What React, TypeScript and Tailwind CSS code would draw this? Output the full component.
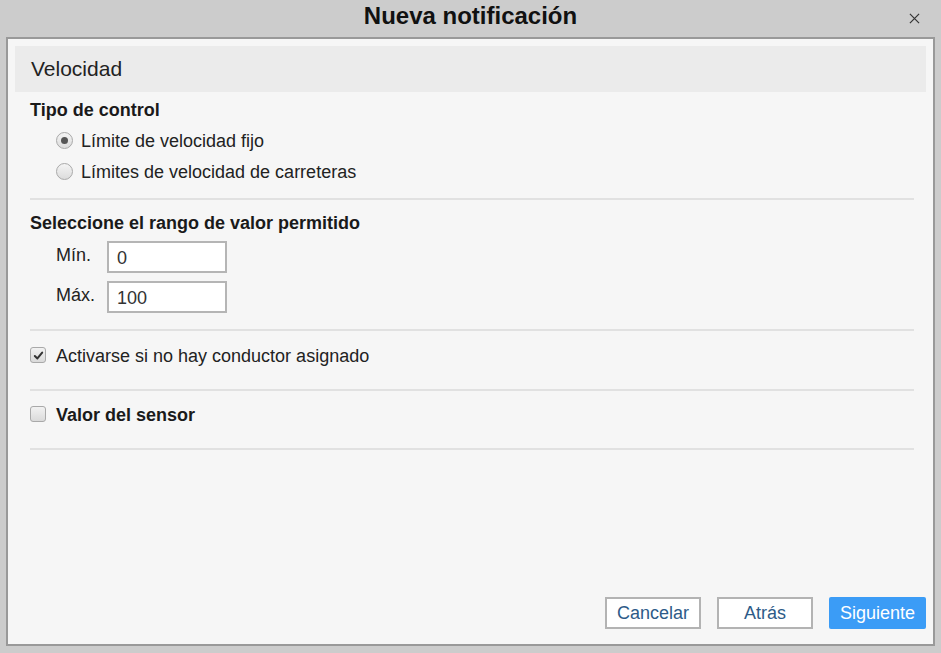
import React, { useState } from 'react';

const Radio: React.FC<{ checked: boolean; label: string; onClick: () => void }> = ({ checked, label, onClick }) => (
  <div className="flex items-center h-[31px] pl-[26px] cursor-pointer" onClick={onClick}>
    <span className="w-[17px] h-[17px] rounded-full border border-[#a9a9a9] bg-gradient-to-b from-[#f4f4f4] to-[#dcdcdc] flex items-center justify-center">
      {checked && <span className="w-[7px] h-[7px] rounded-full bg-[#555]" />}
    </span>
    <span className="ml-[8px] text-[18px] leading-[22px] text-[#222]">{label}</span>
  </div>
);

const Checkbox: React.FC<{ checked: boolean; onClick: () => void }> = ({ checked, onClick }) => (
  <span
    className="w-[16px] h-[16px] rounded-[3px] border border-[#a9a9a9] bg-gradient-to-b from-[#f2f2f2] to-[#dadada] flex items-center justify-center cursor-pointer"
    onClick={onClick}
  >
    {checked && (
      <svg viewBox="0 0 12 12" className="w-[11px] h-[11px]">
        <path d="M2 6.5 L4.8 9.2 L10 2.8" fill="none" stroke="#333" strokeWidth="2.2" strokeLinecap="round" strokeLinejoin="round" />
      </svg>
    )}
  </span>
);

export default function App() {
  const [mode, setMode] = useState(0);
  const [noDriver, setNoDriver] = useState(true);
  const [sensor, setSensor] = useState(false);
  const [min, setMin] = useState('0');
  const [max, setMax] = useState('100');

  return (
    <div className="h-[653px] w-[941px] bg-[#cccccc] flex flex-col" style={{ fontFamily: '"Liberation Sans", Arial, sans-serif' }}>
      <div className="h-[37px] relative flex items-center justify-center pb-[5px]">
        <h1
          className="text-[24px] font-bold text-[#111] leading-none"
          style={{ fontFamily: '"Liberation Sans Narrow", "Arial Narrow", "Liberation Sans", sans-serif' }}
        >
          Nueva notificación
        </h1>
        <button className="absolute right-[21px] top-[12px] w-[12px] h-[12px] flex items-center justify-center">
          <svg viewBox="0 0 12 12" className="w-[11px] h-[11px]">
            <path d="M1 1 L11 11 M11 1 L1 11" stroke="#333" strokeWidth="1.3" />
          </svg>
        </button>
      </div>

      <div className="flex-1 mx-[6px] mb-[7px] border-2 border-[#999999] bg-[#f6f6f6] p-[7px] flex flex-col">
        <div className="h-[46px] bg-[#ebebeb] flex items-center pl-[16px] text-[21px] text-[#222]">Velocidad</div>

        <div className="pl-[15px] pr-[12px]">
          <div className="pt-[7px]">
            <div className="h-[22px] mb-[4px] text-[18px] font-bold text-[#1a1a1a] flex items-center">Tipo de control</div>
            <Radio checked={mode === 0} label="Límite de velocidad fijo" onClick={() => setMode(0)} />
            <Radio checked={mode === 1} label="Límites de velocidad de carreteras" onClick={() => setMode(1)} />
          </div>
          <div className="mt-[11px] border-t-2 border-[#e1e1e1]" />

          <div className="mt-[12px]">
            <div className="h-[22px] text-[18px] font-bold text-[#1a1a1a] flex items-center">Seleccione el rango de valor permitido</div>
            <div className="mt-[7px] flex flex-col gap-[8px] pl-[26px]">
              <div className="flex h-[32px]">
                <span className="w-[51px] pt-[3px] text-[18px] leading-[22px] text-[#222]">Mín.</span>
                <input
                  value={min}
                  onChange={e => setMin(e.target.value)}
                  className="w-[120px] h-[32px] border-2 border-[#b5b5b5] bg-white px-[8px] pt-[2px] text-[18px] text-[#333] outline-none"
                />
              </div>
              <div className="flex h-[32px]">
                <span className="w-[51px] pt-[3px] text-[18px] leading-[22px] text-[#222]">Máx.</span>
                <input
                  value={max}
                  onChange={e => setMax(e.target.value)}
                  className="w-[120px] h-[32px] border-2 border-[#b5b5b5] bg-white px-[8px] pt-[2px] text-[18px] text-[#333] outline-none"
                />
              </div>
            </div>
          </div>
          <div className="mt-[16px] border-t-2 border-[#e1e1e1]" />

          <div className="mt-[8px] h-[32px] flex items-center">
            <Checkbox checked={noDriver} onClick={() => setNoDriver(!noDriver)} />
            <span className="ml-[10px] text-[18px] leading-[22px] pt-[2px] text-[#222]">Activarse si no hay conductor asignado</span>
          </div>
          <div className="mt-[18px] border-t-2 border-[#e1e1e1]" />

          <div className="mt-[7px] h-[32px] flex items-center">
            <Checkbox checked={sensor} onClick={() => setSensor(!sensor)} />
            <span className="ml-[10px] text-[18px] leading-[22px] pt-[2px] font-bold text-[#1a1a1a]">Valor del sensor</span>
          </div>
          <div className="mt-[18px] border-t-2 border-[#e1e1e1]" />
        </div>

        <div className="flex-1" />

        <div className="flex justify-end gap-[16px] mb-[8px]">
          <button className="w-[96px] h-[32px] border-2 border-[#b3b3b3] bg-white text-[18px] text-[#2d5b88]">Cancelar</button>
          <button className="w-[96px] h-[32px] border-2 border-[#b3b3b3] bg-white text-[18px] text-[#2d5b88]">Atrás</button>
          <button className="w-[97px] h-[32px] rounded-[2px] bg-[#3b9cf6] text-[18px] text-white">Siguiente</button>
        </div>
      </div>
    </div>
  );
}
